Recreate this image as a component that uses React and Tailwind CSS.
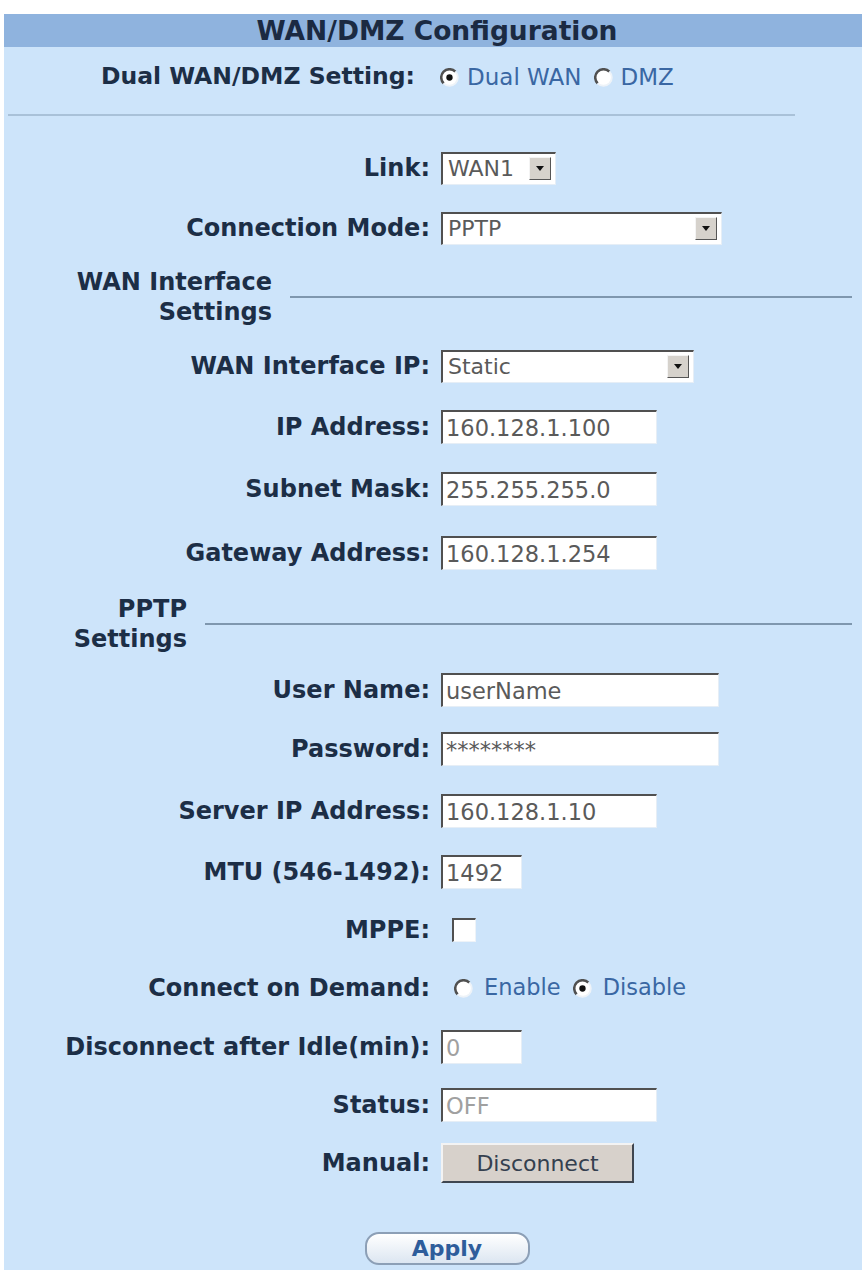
import React from 'react';

const font = "font-['DejaVu_Sans',Verdana,sans-serif]";

const Radio = ({ checked }) => (
    <svg width="19" height="19" viewBox="0 0 12 12" className="shrink-0">
        <circle cx="6" cy="6" r="5.3" fill="#ffffff" />
        <path d="M2.3 9.7 A5.2 5.2 0 0 1 9.7 2.3" fill="none" stroke="#505050" strokeWidth="1.6" />
        <path d="M9.7 2.3 A5.2 5.2 0 0 1 2.3 9.7" fill="none" stroke="#eef3f8" strokeWidth="1.2" />
        {checked && <circle cx="6" cy="6" r="2" fill="#111111" />}
    </svg>
);

const TextBox = ({ value, w, muted }) => (
    <input
        readOnly
        value={value}
        className={`${w} h-[34px] bg-white border-t-2 border-l-2 border-r border-b border-t-[#505050] border-l-[#505050] border-r-[#e6eef6] border-b-[#e6eef6] pl-[3px] text-[22.5px] outline-none ${muted ? 'text-[#a0a0a0]' : 'text-[#5a5a5a]'}`}
    />
);

const Select = ({ value, w }) => (
    <div className={`${w} h-[33px] flex items-center bg-white border-t-2 border-l-2 border-r border-b border-t-[#505050] border-l-[#505050] border-r-[#e6eef6] border-b-[#e6eef6]`}>
        <span className="flex-1 pl-[5px] text-[22px] text-[#5a5a5a] leading-none">{value}</span>
        <span className="w-[22px] h-[23px] mr-[4px] flex items-center justify-center bg-[#d6d2cc] border border-t-[#f4f4f4] border-l-[#f4f4f4] border-r-[#555] border-b-[#555]">
            <svg width="8" height="5" viewBox="0 0 8 5"><path d="M0 0 H8 L4 5 Z" fill="#111" /></svg>
        </span>
    </div>
);

const Row = ({ label, h, children }) => (
    <div className={`flex items-center ${h}`}>
        <div className="w-[426px] shrink-0 text-right font-bold text-[24px] text-[#1c2e46] whitespace-nowrap">{label}</div>
        <div className="ml-[11px] flex items-center">{children}</div>
    </div>
);

const Heading = ({ first, w, h }) => (
    <div className={`flex items-center ${h}`}>
        <div className={`${w} shrink-0 text-right font-bold text-[24px] leading-[30px] text-[#1c2e46]`}>
            {first}
            <br />
            Settings
        </div>
        <div className="flex-1 ml-[18px] mr-[10px] h-[2px] bg-[#7f97ae]" />
    </div>
);

export default function App() {
    return (
        <div className={`w-[865px] h-[1270px] bg-white pt-[14px] pl-[4px] pr-[3px] overflow-hidden ${font}`}>
            <div className="bg-[#cde4fa] h-full">
                {/* title bar */}
                <div className="h-[33px] bg-[#8fb3de] flex items-center justify-center font-bold text-[26.5px] text-[#1b2a42] pl-[8px]">
                    WAN/DMZ Configuration
                </div>

                {/* dual wan */}
                <div className="flex items-center h-[60px]">
                    <div className="w-[411px] shrink-0 text-right font-bold text-[23.5px] text-[#1c2e46]">Dual WAN/DMZ Setting:</div>
                    <div className="ml-[25px] flex items-center text-[23px] text-[#3a67a3]">
                        <Radio checked />
                        <span className="ml-[8px]">Dual WAN</span>
                        <span className="ml-[12px]"><Radio /></span>
                        <span className="ml-[8px]">DMZ</span>
                    </div>
                </div>
                <div className="mt-[7px] ml-[4px] w-[787px] h-[2px] bg-[#a9c1d8]" />

                <div className="h-[22px]" />
                <Row label="Link:" h="h-[60px]"><Select value="WAN1" w="w-[115px]" /></Row>
                <Row label="Connection Mode:" h="h-[60px]"><Select value="PPTP" w="w-[281px]" /></Row>

                <Heading first="WAN Interface" w="w-[268px]" h="h-[78px]" />

                <Row label="WAN Interface IP:" h="h-[60px]"><Select value="Static" w="w-[253px]" /></Row>
                <Row label="IP Address:" h="h-[62px]"><TextBox value="160.128.1.100" w="w-[216px]" /></Row>
                <Row label="Subnet Mask:" h="h-[62px]"><TextBox value="255.255.255.0" w="w-[216px]" /></Row>
                <Row label="Gateway Address:" h="h-[66px]"><TextBox value="160.128.1.254" w="w-[216px]" /></Row>

                <Heading first="PPTP" w="w-[183px]" h="h-[76px]" />

                <Row label="User Name:" h="h-[56px]"><TextBox value="userName" w="w-[278px]" /></Row>
                <Row label="Password:" h="h-[62px]"><TextBox value="********" w="w-[278px]" /></Row>
                <Row label="Server IP Address:" h="h-[62px]"><TextBox value="160.128.1.10" w="w-[216px]" /></Row>
                <Row label="MTU (546-1492):" h="h-[60px]"><TextBox value="1492" w="w-[81px]" /></Row>
                <Row label="MPPE:" h="h-[56px]">
                    <div className="ml-[11px] w-[24px] h-[24px] bg-white border-t-2 border-l-2 border-r border-b border-t-[#505050] border-l-[#505050] border-r-[#eef3f8] border-b-[#eef3f8]" />
                </Row>
                <Row label="Connect on Demand:" h="h-[60px]">
                    <div className="ml-[13px] flex items-center text-[22.5px] text-[#3a67a3]">
                        <Radio />
                        <span className="ml-[11px]">Enable</span>
                        <span className="ml-[12px]"><Radio checked /></span>
                        <span className="ml-[11px]">Disable</span>
                    </div>
                </Row>
                <Row label="Disconnect after Idle(min):" h="h-[58px]"><TextBox value="0" w="w-[81px]" muted /></Row>
                <Row label="Status:" h="h-[58px]"><TextBox value="OFF" w="w-[216px]" muted /></Row>
                <Row label="Manual:" h="h-[58px]">
                    <button className="w-[193px] h-[40px] bg-[#d7d1cb] border-2 border-t-[#f3f3f3] border-l-[#f3f3f3] border-r-[#3f4650] border-b-[#3f4650] text-[22px] text-[#34404f]">
                        Disconnect
                    </button>
                </Row>

                <div className="h-[78px] flex items-end justify-center pl-[28px] pb-[5px]">
                    <button className="w-[165px] h-[33px] rounded-[14px] border-2 border-[#8c9fb6] bg-gradient-to-b from-white to-[#dce6f1] font-bold text-[22px] text-[#2e5d9b] leading-none">
                        Apply
                    </button>
                </div>
            </div>
        </div>
    );
}
